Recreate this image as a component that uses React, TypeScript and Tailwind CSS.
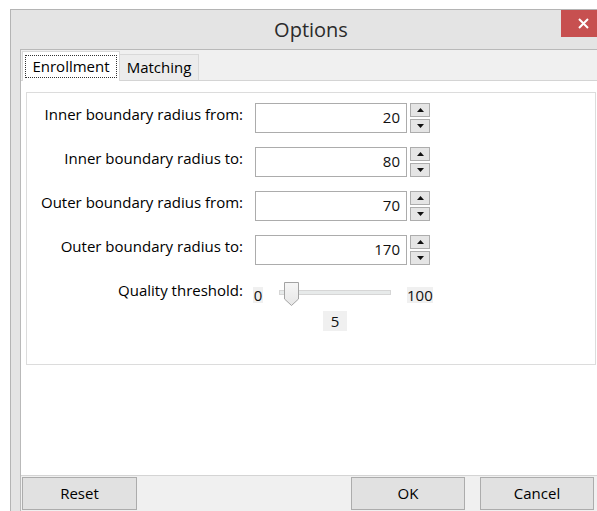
import { useState } from "react";

/* ─── Enrollment options ─── */
interface NumField {
  label: string;
  value: number;
}

const FIELDS: NumField[] = [
  { label: "Inner boundary radius from:", value: 20 },
  { label: "Inner boundary radius to:", value: 80 },
  { label: "Outer boundary radius from:", value: 70 },
  { label: "Outer boundary radius to:", value: 170 },
];

/* little black arrow used by the spin buttons */
const Arrow = ({ up }: { up: boolean }) => (
  <svg width="7" height="4" viewBox="0 0 7 4">
    <path d={up ? "M0 4 L3.5 0 L7 4 Z" : "M0 0 L7 0 L3.5 4 Z"} fill="#111" />
  </svg>
);

const SpinBox = ({ value }: { value: number }) => (
  <div className="ml-[12px] flex">
    <div className="flex h-[30px] w-[152px] items-center justify-end border border-[#acacac] bg-white pb-[2px] pr-[6px] text-[15px] text-[#111]">
      {value}
    </div>
    <div className="ml-[3px] flex w-[20px] flex-col gap-[2px]">
      <button className="flex h-[14px] items-center justify-center border border-[#adadad] bg-[#e5e5e5]">
        <Arrow up />
      </button>
      <button className="flex h-[14px] items-center justify-center border border-[#adadad] bg-[#e5e5e5]">
        <Arrow up={false} />
      </button>
    </div>
  </div>
);

/* trackbar with min/max labels and current value underneath */
const Threshold = ({ value }: { value: number }) => (
  <div className="ml-[10px] flex flex-col text-[15px] leading-[16px] text-[#111]">
    <div className="flex h-[32px]">
      <span className="mt-[8px] h-[16px] w-[10px] bg-[#f0f0f0] text-center">0</span>
      <div className="relative ml-[16px] w-[112px]">
        <div className="mt-[11px] h-[5px] border border-[#d6d6d6] bg-[#e7eaea]" />
        <svg
          className="absolute left-[5px] top-[3px]"
          width="15"
          height="24"
          viewBox="0 0 15 24"
        >
          <defs>
            <linearGradient id="thumb" x1="0" y1="0" x2="0" y2="1">
              <stop offset="0" stopColor="#f6f6f6" />
              <stop offset="1" stopColor="#e6e6e6" />
            </linearGradient>
          </defs>
          <path
            d="M0.5 0.5 H14.5 V17 L7.5 23.5 L0.5 17 Z"
            fill="url(#thumb)"
            stroke="#a3a3a3"
          />
        </svg>
      </div>
      <span className="ml-[16px] mt-[8px] h-[16px] bg-[#f0f0f0]">100</span>
    </div>
    <span className="ml-[70px] flex h-[20px] w-[24px] items-center justify-center bg-[#f0f0f0]">
      {value}
    </span>
  </div>
);

export default function App() {
  const [tab, setTab] = useState<"enroll" | "match">("enroll");

  return (
    <div className="h-[511px] w-[597px] overflow-hidden bg-white pl-[10px] pt-[9px] font-['Open_Sans','Noto_Sans',sans-serif]">
      {/* window frame */}
      <div className="relative flex h-[530px] w-[602px] flex-col border border-[#b4b4b4] bg-[#e4e4e4]">
        <div className="flex h-[39px] items-center justify-center text-[20px] text-[#2b2b2b]">
          Options
        </div>
        <button className="absolute right-[5px] top-0 flex h-[27px] w-[45px] items-center justify-center bg-[#c75050]">
          <svg width="11" height="11" viewBox="0 0 11 11">
            <path d="M1 1 L10 10 M10 1 L1 10" stroke="#fff" strokeWidth="2" />
          </svg>
        </button>

        {/* client area */}
        <div className="ml-[9px] mr-[9px] flex flex-1 flex-col border-l border-r border-t border-[#b9b9b9] bg-[#f0f0f0] text-[15px] text-black">
          {/* tab headers */}
          <div className="flex h-[30px] items-end pl-[1px]">
            <button
              onClick={() => setTab("enroll")}
              className="relative z-10 -mb-[1px] flex h-[30px] w-[98px] items-center justify-center border border-b-0 border-[#d9d9d9] bg-white"
            >
              <span className="border border-dotted border-[#333] px-[6px] leading-[21px]">
                Enrollment
              </span>
            </button>
            <button
              onClick={() => setTab("match")}
              className="-ml-[1px] flex h-[26px] w-[80px] items-center justify-center border border-b-0 border-[#d9d9d9] bg-[#ececec]"
            >
              Matching
            </button>
          </div>

          {/* tab page */}
          <div className="h-[396px] border-b border-t border-[#d4d4d4] bg-white pl-[5px] pr-[5px] pt-[11px]">
            {tab === "enroll" && (
              <div className="flex h-[273px] flex-col gap-[14px] border border-[#dcdcdc] pt-[10px]">
                {FIELDS.map((f) => (
                  <div key={f.label} className="flex items-start">
                    <span className="mt-[1px] w-[216px] text-right leading-[20px]">{f.label}</span>
                    <SpinBox value={f.value} />
                  </div>
                ))}
                <div className="flex items-start">
                  <span className="mt-[1px] w-[216px] text-right leading-[20px]">Quality threshold:</span>
                  <Threshold value={5} />
                </div>
              </div>
            )}
          </div>

          {/* dialog buttons */}
          <div className="flex pl-[1px] pr-[7px] pt-[1px]">
            <button className="h-[33px] w-[115px] border border-[#acacac] bg-[#e1e1e1]">Reset</button>
            <div className="ml-auto flex gap-[15px]">
              <button className="h-[33px] w-[114px] border border-[#acacac] bg-[#e1e1e1]">OK</button>
              <button className="h-[33px] w-[114px] border border-[#acacac] bg-[#e1e1e1]">Cancel</button>
            </div>
          </div>
        </div>
      </div>
    </div>
  );
}
